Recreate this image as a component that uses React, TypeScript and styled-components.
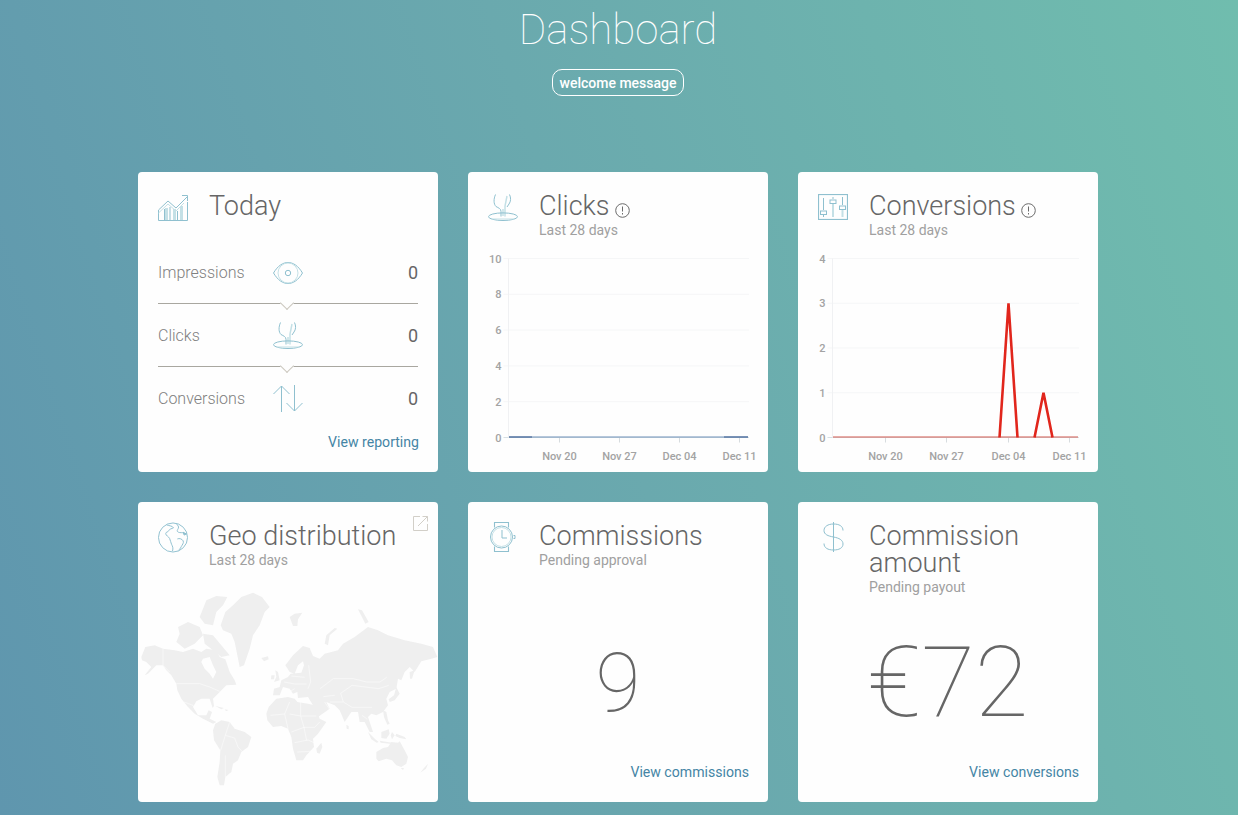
import React from 'react';
import styled, { createGlobalStyle } from 'styled-components';

const GlobalStyle = createGlobalStyle`
  html, body {
    margin: 0;
    padding: 0;
    height: 100%;
  }
  body {
    overflow: hidden;
    font-family: Roboto, "Liberation Sans", sans-serif;
  }
`;

const ICON = '#8fc0cf';
const ICON_SOFT = '#c4e0e6';
const CARD_BG = '#fefefe';

const TrendIcon = () => (
  <svg width="30" height="27" viewBox="0 0 30 27" fill="none" stroke={ICON}>
    <path d="M7 14h3v12H7zM15 15h3v11h-3zM22 12h3v14h-3z" fill={ICON_SOFT} stroke="none" />
    <path d="M.5 26.5V16L10 7l8 7 11-11" />
    <path d="M.5 19L10 10l8 7 8-8" stroke={ICON_SOFT} />
    <path d="M24 1.5h5.5V7M29.5 8v18.5H.5M6.5 15v11M12 13v13M19.5 17v9" />
  </svg>
);

const TouchIcon = () => (
  <svg width="30" height="27" viewBox="0 0 30 27" fill="none" stroke={ICON}>
    <path d="M7.5.5C5.500 5 5.500 10 8 12.500c2.500 1.500 5 2 5 5v5M21.500.5c1.500 3 1.500 7-.5 9.500l-2 3" />
    <path d="M19 2l-2 10v10.500M15 15v7" stroke={ICON_SOFT} strokeWidth="1.500" />
    <ellipse cx="15" cy="22.700" rx="14.500" ry="3.800" />
    <path d="M4 25h22" stroke={ICON_SOFT} />
  </svg>
);

const EyeIcon = () => (
  <svg width="30" height="22" viewBox="0 0 30 22" fill="none" stroke={ICON}>
    <path d="M.5 11C5 3.500 10 .5 15 .5S25 3.500 29.500 11C25 18.500 20 21.500 15 21.500S5 18.500 .5 11z" />
    <circle cx="15" cy="11" r="10" stroke={ICON_SOFT} />
    <circle cx="15" cy="11" r="2.700" />
  </svg>
);

const ArrowsIcon = () => (
  <svg width="30" height="27" viewBox="0 0 30 27" fill="none" stroke={ICON}>
    <path d="M8.500 27V1M.5 9l8-8 8 8" />
    <path d="M21.500 0v26M13.500 18l8 8 8-8" />
  </svg>
);

const SlidersIcon = () => (
  <svg width="30" height="26" viewBox="0 0 30 26" fill="none" stroke={ICON}>
    <rect x=".5" y=".5" width="29" height="25" strokeWidth="1.200" />
    <path d="M5.500 4v12M5.500 21v2M15 3v2M24.500 3v8" />
    <path d="M15 10v13M24.500 16v7" stroke={ICON_SOFT} strokeWidth="2" />
    <rect x="2.500" y="17" width="6" height="3.500" />
    <rect x="12" y="6" width="6" height="3.500" />
    <rect x="21.500" y="12" width="6" height="3.500" />
  </svg>
);

const GlobeIcon = () => (
  <svg width="31" height="31" viewBox="0 0 31 31" fill="none" stroke={ICON}>
    <circle cx="15.500" cy="15.500" r="15" />
    <path d="M9 2.500c3 1 6 1 7 3-2 1-4 1-5 3s-3 1-3 3 3 3 4 5 1 4 2 6 2 4 1 7" />
    <path d="M19 1c1 2 3 3 2 5s-2 3 0 4 4 0 6 1l3 1M20 17c2-1 5 0 6 2s-1 4-2 6-2 3-3 4" />
    <path d="M26 10l3 2-2 1z" fill={ICON} />
  </svg>
);

const WatchIcon = () => (
  <svg width="27" height="30" viewBox="0 0 27 30" fill="none" stroke={ICON}>
    <path d="M4.500 5.500V.5h14v5M4.500 24.500v5h14v-5" strokeWidth="1.100" />
    <circle cx="11.500" cy="15" r="11" />
    <circle cx="11.500" cy="15" r="9.500" stroke={ICON_SOFT} />
    <path d="M12 8v8h5" />
    <path d="M23.500 13.500h1.500v3h-1.500" />
  </svg>
);

const DollarIcon = () => (
  <svg width="21" height="30" viewBox="0 0 21 30" fill="none" stroke={ICON}>
    <path d="M20 8.500C20 4 16 2 10.500 2S1 4.500 1 8.500s4 5.500 9.500 6.500S20 18 20 22s-4 6-9.500 6S1 26 1 21.500" />
    <path d="M10.500 0v30" />
  </svg>
);

const InfoIcon = () => (
  <svg width="15" height="15" viewBox="0 0 15 15" fill="none" stroke="#6b6b6b">
    <circle cx="7.500" cy="7.500" r="6.800" />
    <path d="M7.500 3.500v5M7.500 10v1.500" />
  </svg>
);

const ExpandIcon = () => (
  <svg width="15" height="15" viewBox="0 0 15 15" fill="none" stroke="#d2cfc8">
    <path d="M7 .5H.5v14h14V8" />
    <path d="M5 10L14.500.5M9.500.5h5v5" />
  </svg>
);

const Page = styled.div`
  box-sizing: border-box;
  height: 815px;
  overflow: hidden;
  padding: 0 140px 0 138px;
  background: linear-gradient(72deg, #5f96ae 0%, #6aa9ae 50%, #70bdae 100%);
`;

const Hero = styled.header`
  display: flex;
  flex-direction: column;
  align-items: center;
  height: 172px;
`;

const PageTitle = styled.h1`
  margin: 5px 0 0;
  font-size: 42px;
  line-height: 49px;
  font-weight: 100;
  color: #fff;
`;

const Welcome = styled.div`
  box-sizing: border-box;
  height: 27px;
  margin-top: 15px;
  padding: 0 7px;
  border: 1px solid #fff;
  border-radius: 10px;
  font-size: 14px;
  line-height: 26px;
  font-weight: 500;
  color: #fff;
`;

const Grid = styled.main`
  display: grid;
  grid-template-columns: repeat(3, 300px);
  grid-auto-rows: 300px;
  gap: 30px;
`;

const Card = styled.section`
  position: relative;
  display: flex;
  flex-direction: column;
  overflow: hidden;
  border-radius: 4px;
  background: ${CARD_BG};
`;

const Head = styled.div`
  display: flex;
  padding: 20px 20px 0;
`;

const IconSlot = styled.div<{ $top?: number }>`
  flex: none;
  display: flex;
  justify-content: center;
  align-items: flex-start;
  width: 30px;
  margin-right: 21px;
  padding-top: ${p => p.$top ?? 2}px;
`;

const TitleBlock = styled.div`
  flex: 1;
  min-width: 0;
  padding-top: 1px;
`;

const TitleRow = styled.div`
  display: flex;
  align-items: flex-end;
  gap: 5px;
`;

const Title = styled.h2`
  margin: 0;
  font-size: 27px;
  line-height: 27px;
  font-weight: 300;
  color: #666;
`;

const InfoSlot = styled.span`
  display: flex;
  padding-bottom: 2px;
`;

const Subtitle = styled.div`
  margin-top: 2px;
  font-size: 14px;
  line-height: 16px;
  color: #a0a0a0;
`;

const ExpandLink = styled.a`
  position: absolute;
  top: 14px;
  right: 10px;
  display: flex;
`;

const StatList = styled.div`
  display: flex;
  flex-direction: column;
  margin-top: 20px;
  padding: 0 20px;
`;

const StatRow = styled.div<{ $divider?: boolean }>`
  position: relative;
  display: flex;
  align-items: center;
  box-sizing: content-box;
  height: 61px;
  padding-top: 1px;
  border-bottom: ${p => (p.$divider ? '1px solid #a9a7a0' : '1px solid transparent')};

  ${p =>
    p.$divider &&
    `
    &::after {
      content: '';
      position: absolute;
      left: 124px;
      bottom: -5px;
      width: 10px;
      height: 10px;
      box-sizing: border-box;
      background: ${CARD_BG};
      border-right: 1px solid #cbc8bf;
      border-bottom: 1px solid #cbc8bf;
      transform: rotate(45deg);
    }
  `}
`;

const StatLabel = styled.span`
  width: 115px;
  font-size: 16px;
  font-weight: 300;
  color: #808080;
`;

const StatIcon = styled.span`
  display: flex;
  justify-content: center;
  width: 30px;
`;

const StatValue = styled.span`
  margin-left: auto;
  font-size: 18px;
  color: #666;
`;

const Foot = styled.div`
  display: flex;
  justify-content: flex-end;
  margin-top: auto;
  padding: 0 19px 21px 20px;
`;

const ViewLink = styled.a`
  font-size: 14.1px;
  line-height: 17px;
  color: #4585a5;
`;

const BigNumber = styled.div<{ $size: number; $top: number }>`
  margin-top: ${p => p.$top}px;
  text-align: center;
  font-size: ${p => p.$size}px;
  line-height: 110px;
  font-weight: 100;
  color: #666;
`;

const ChartSvg = styled.svg`
  display: block;
  margin-top: 13px;
  font-family: Roboto, "Liberation Sans", sans-serif;
  font-size: 11px;
  font-weight: 500;
`;

const MapSvg = styled.svg`
  display: block;
  margin-top: 24px;
`;

const GRID = '#f5f6f7';
const LABEL = '#a3a3a3';

interface ChartProps {
  axisX: number;
  labels: string[];
  ticks: number[];
  drawLine: (y0: number, step: number) => React.ReactNode;
}

// plot runs from y 85.5 to y 264.5 in card coordinates, the svg starts 78 lower than the card top
const OFFSET = 78;
const Chart = ({ axisX, labels, ticks, drawLine }: ChartProps) => {
  const top = 85.5 - OFFSET;
  const bottom = 264.5 - OFFSET;
  const step = (bottom - top) / (labels.length - 1);
  return (
    <ChartSvg width="300" height="221" viewBox="0 0 300 221">
      {labels.map((label, i) => {
        const y = bottom - i * step;
        return (
          <g key={label}>
            <line x1={axisX - 5} x2="281" y1={y} y2={y} stroke={i === 0 ? '#d7e0e4' : GRID} />
            <text x={axisX - 7} y={y + 4} textAnchor="end" fill={LABEL}>
              {label}
            </text>
          </g>
        );
      })}
      <line x1={axisX} x2={axisX} y1={top} y2={bottom} stroke="#f0f1f3" />
      {ticks.map((x, i) => (
        <g key={x}>
          <line x1={x} x2={x} y1={bottom} y2={bottom + 5} stroke="#d7dcdf" />
          <text x={x} y={bottom + 22} textAnchor="middle" fill={LABEL}>
            {['Nov 20', 'Nov 27', 'Dec 04', 'Dec 11'][i]}
          </text>
        </g>
      ))}
      {drawLine(bottom, step)}
    </ChartSvg>
  );
};

const LAND = [
  // Greenland and the arctic islands
  'M248 370L262 330L285 310L310 285L345 272L372 285L395 315L380 330L365 370L345 400L335 440L318 490L305 495L298 460L290 420L280 395L255 385Z',
  'M205 295L235 282L268 285L255 310L235 330L225 370L200 365L185 345L195 320Z',
  'M120 375L150 360L185 375L195 400L170 425L140 440L115 420L125 395Z',
  'M195 395L225 400L250 430L275 460L250 465L225 445L200 425Z',
  'M455 345L470 335L493 332L480 352L478 372L465 372Z',
  'M370 468L390 463L392 472L378 478Z',
  'M590 378L598 380L575 400L570 430L560 425L565 400Z',
  'M660 322L672 325L692 360L682 365Z',
  // North and Central America
  'M10 465L22 435L50 430L75 440L110 445L135 450L165 440L190 450L205 440L235 445L245 465L262 472L275 510L290 535L295 548L265 550L245 570L225 590L228 612L224 618L215 590L190 590L175 598L165 615L180 640L205 640L212 625L222 630L215 650L235 660L225 665L195 650L170 635L150 615L130 590L118 565L115 545L100 520L85 505L75 490L55 490L30 515L20 520L40 495L25 480L12 475Z',
  'M232 612L258 618L250 622ZM260 622L272 624L264 628Z',
  // South America
  'M232 665L250 655L275 660L290 680L320 690L340 705L330 735L310 750L300 775L285 785L280 810L262 825L258 850L245 850L238 825L245 780L247 745L228 715L225 685Z',
  // Africa and Madagascar
  'M392 615L415 590L450 585L470 590L478 600L510 605L530 610L545 650L565 660L540 695L525 710L528 735L505 760L495 775L475 775L465 740L460 705L450 680L430 672L405 675L388 655L385 635Z',
  'M550 722L553 735L545 755L537 752L535 740Z',
  // Europe and Asia
  'M405 580L408 560L425 555L430 535L450 525L458 515L490 512L498 490L495 478L480 490L470 515L455 510L442 490L465 460L495 432L515 438L525 462L545 470L560 455L600 445L615 425L650 405L690 375L720 385L750 400L800 415L850 425L885 435L898 465L880 470L850 478L830 510L815 495L800 510L790 535L780 530L775 560L755 570L745 590L750 610L735 630L715 640L700 635L690 645L705 690L695 690L680 660L665 660L660 630L640 630L620 660L605 625L590 610L565 600L575 620L540 645L525 610L510 585L480 588L478 570L465 575L455 560L435 555L425 580Z',
  // islands of Europe, Asia and Oceania
  'M412 505L420 510L425 535L408 540L415 525ZM400 520L410 520L408 532L399 532Z',
  'M815 510L830 505L822 530L816 530ZM775 555L785 575L770 595L755 600L752 592L768 580Z',
  'M735 625L745 630L750 655L755 665L748 668L738 645ZM625 668L632 672L632 682L626 680Z',
  'M690 690L712 712L722 720L716 722L700 712ZM730 690L752 682L755 695L745 710L730 708Z',
  'M725 716L762 722L762 726L728 722ZM762 690L770 700L762 712L758 700ZM775 695L800 705L805 712L785 708L772 702Z',
  'M715 750L735 738L750 735L760 720L780 722L785 718L800 745L810 765L805 785L790 795L775 790L762 775L745 770L722 778L715 770Z',
  'M847 812L858 798L870 785L864 800ZM788 798L798 798L795 804Z',
];

const BORDERS = [
  // the Americas
  'M75 440V490L95 510M115 545H185L215 555L245 568M138 600L165 610L180 630M248 745L262 700L290 708L300 735L312 748M262 700L275 660M262 825L262 760',
  // Africa
  'M398 640L440 636L455 600M455 636L488 642V600M488 642H535M440 636L450 680M488 642L498 676L460 690M498 676H530L545 660M498 676L506 716M470 722L510 714L528 722M478 750L520 748',
  // Europe and Asia
  'M512 490L518 540L510 560M438 540L470 546L506 546M460 522L500 526M445 575L470 560M546 560L586 530H646L686 540L726 540L746 526M576 600H616L642 616L702 616M642 550L722 560L752 550M616 600L608 574L642 550M672 640L688 652M560 600L580 630L600 634M590 580L556 584',
];

const WorldMap = () => (
  <MapSvg width="300" height="200" viewBox="0 270 900 600">
    <g fill="#efefef">
      {LAND.map(d => (
        <path key={d} d={d} />
      ))}
      {/* Hudson Bay */}
      <path d="M195 470L215 465L225 490L235 510L225 530L215 515L200 500L190 480Z" fill={CARD_BG} />
    </g>
    <g fill="none" stroke={CARD_BG} strokeWidth="1.500">
      {BORDERS.map(d => (
        <path key={d} d={d} />
      ))}
    </g>
  </MapSvg>
);

const App = () => (
  <Page>
    <GlobalStyle />
    <Hero>
      <PageTitle>Dashboard</PageTitle>
      <Welcome>welcome message</Welcome>
    </Hero>
    <Grid>
      <Card>
        <Head>
          <IconSlot>
            <TrendIcon />
          </IconSlot>
          <TitleBlock>
            <Title>Today</Title>
          </TitleBlock>
        </Head>
        <StatList>
          <StatRow $divider>
            <StatLabel>Impressions</StatLabel>
            <StatIcon>
              <EyeIcon />
            </StatIcon>
            <StatValue>0</StatValue>
          </StatRow>
          <StatRow $divider>
            <StatLabel>Clicks</StatLabel>
            <StatIcon>
              <TouchIcon />
            </StatIcon>
            <StatValue>0</StatValue>
          </StatRow>
          <StatRow>
            <StatLabel>Conversions</StatLabel>
            <StatIcon>
              <ArrowsIcon />
            </StatIcon>
            <StatValue>0</StatValue>
          </StatRow>
        </StatList>
        <Foot>
          <ViewLink>View reporting</ViewLink>
        </Foot>
      </Card>

      <Card>
        <Head>
          <IconSlot>
            <TouchIcon />
          </IconSlot>
          <TitleBlock>
            <TitleRow>
              <Title>Clicks</Title>
              <InfoSlot>
                <InfoIcon />
              </InfoSlot>
            </TitleRow>
            <Subtitle>Last 28 days</Subtitle>
          </TitleBlock>
        </Head>
        <Chart
          axisX={40.5}
          labels={['0', '2', '4', '6', '8', '10']}
          ticks={[91.5, 151.5, 211.5, 271.5]}
          drawLine={y0 => (
            <>
              <path d={`M41 ${y0 - 0.5}H280`} stroke="#6f8fb8" strokeWidth="1.200" fill="none" />
              <path d={`M41 ${y0 - 0.5}H64M256 ${y0 - 0.5}H280`} stroke="#3d5f92" strokeWidth="1.200" fill="none" />
            </>
          )}
        />
      </Card>

      <Card>
        <Head>
          <IconSlot>
            <SlidersIcon />
          </IconSlot>
          <TitleBlock>
            <TitleRow>
              <Title>Conversions</Title>
              <InfoSlot>
                <InfoIcon />
              </InfoSlot>
            </TitleRow>
            <Subtitle>Last 28 days</Subtitle>
          </TitleBlock>
        </Head>
        <Chart
          axisX={34.5}
          labels={['0', '1', '2', '3', '4']}
          ticks={[87.5, 148.5, 210.5, 271.5]}
          drawLine={(y0, step) => (
            <>
              <path d={`M35 ${y0 - 0.5}H280`} stroke="#d2584e" strokeWidth="1.200" fill="none" />
              <path
                d={`M201.500 ${y0}L210.500 ${y0 - 3 * step}L219.500 ${y0}M236.500 ${y0}L245.500 ${y0 - step}L254.500 ${y0}`}
                stroke="#e1261c"
                strokeWidth="2.600"
                fill="none"
              />
            </>
          )}
        />
      </Card>

      <Card>
        <Head>
          <IconSlot $top={0}>
            <GlobeIcon />
          </IconSlot>
          <TitleBlock>
            <Title>Geo distribution</Title>
            <Subtitle>Last 28 days</Subtitle>
          </TitleBlock>
        </Head>
        <ExpandLink>
          <ExpandIcon />
        </ExpandLink>
        <WorldMap />
      </Card>

      <Card>
        <Head>
          <IconSlot $top={0}>
            <WatchIcon />
          </IconSlot>
          <TitleBlock>
            <Title>Commissions</Title>
            <Subtitle>Pending approval</Subtitle>
          </TitleBlock>
        </Head>
        <BigNumber $size={82} $top={60}>
          9
        </BigNumber>
        <Foot>
          <ViewLink>View commissions</ViewLink>
        </Foot>
      </Card>

      <Card>
        <Head>
          <IconSlot $top={0}>
            <DollarIcon />
          </IconSlot>
          <TitleBlock>
            <Title>Commission amount</Title>
            <Subtitle>Pending payout</Subtitle>
          </TitleBlock>
        </Head>
        <BigNumber $size={98} $top={33}>
          €72
        </BigNumber>
        <Foot>
          <ViewLink>View conversions</ViewLink>
        </Foot>
      </Card>
    </Grid>
  </Page>
);

export default App;
